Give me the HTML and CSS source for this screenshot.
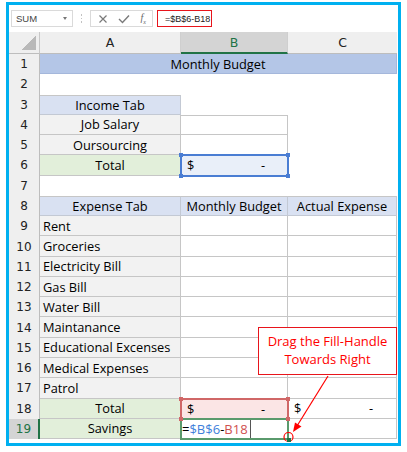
FILE: index.html
```html
<!DOCTYPE html>
<html lang="en">
<head>
  <meta charset="UTF-8" />
  <title>Monthly Budget</title>
  <link rel="stylesheet" href="styles.css">
</head>
<body>
  <div class="frame">
    <div class="fbar">
      <div class="namebox">SUM<span class="drop"></span></div>
      <div class="dots"><i></i><i></i><i></i></div>
      <div class="fbtns">
        <svg width="10" height="10" viewBox="0 0 10 10"><path d="M1.5 1.5 L8.5 8.5 M8.5 1.5 L1.5 8.5" stroke="#7a7a7a" stroke-width="1.2" fill="none"/></svg>
        <svg width="12" height="10" viewBox="0 0 12 10"><path d="M1 5 L4.5 8.5 L11 1.5" stroke="#7a7a7a" stroke-width="1.4" fill="none"/></svg>
        <span class="fx">f<sub>x</sub></span>
      </div>
      <div class="finput"><span class="fhl">=$B$6-B18</span></div>
    </div>

    <div class="sheet">
      <div class="corner"><span></span></div>
      <div class="ch">A</div>
      <div class="ch on">B</div>
      <div class="ch last">C</div>

      <div class="rh">1</div>
      <div class="c title">Monthly Budget</div>

      <div class="rh">2</div>
      <div class="c wide"></div>

      <div class="rh">3</div>
      <div class="c hd bt ctr">Income Tab</div>
      <div class="c"></div>
      <div class="c"></div>

      <div class="rh">4</div>
      <div class="c gy bx ctr">Job Salary</div>
      <div class="c bx bt"></div>
      <div class="c"></div>

      <div class="rh">5</div>
      <div class="c gy bx ctr">Oursourcing</div>
      <div class="c bx"></div>
      <div class="c"></div>

      <div class="rh">6</div>
      <div class="c gr bx ctr">Total</div>
      <div class="c acct sel blue">
        <span>$</span><span>-</span>
        <i class="knob tl"></i><i class="knob tr"></i><i class="knob bl"></i><i class="knob br"></i>
      </div>
      <div class="c"></div>

      <div class="rh">7</div>
      <div class="c wide"></div>

      <div class="rh">8</div>
      <div class="c hd bt ctr">Expense Tab</div>
      <div class="c hd bt ctr">Monthly Budget</div>
      <div class="c hd bt ctr">Actual Expense</div>

      <div class="rh">9</div>
      <div class="c gy bx">Rent</div>
      <div class="c bx"></div>
      <div class="c bx"></div>

      <div class="rh">10</div>
      <div class="c gy bx">Groceries</div>
      <div class="c bx"></div>
      <div class="c bx"></div>

      <div class="rh">11</div>
      <div class="c gy bx">Electricity Bill</div>
      <div class="c bx"></div>
      <div class="c bx"></div>

      <div class="rh">12</div>
      <div class="c gy bx">Gas Bill</div>
      <div class="c bx"></div>
      <div class="c bx"></div>

      <div class="rh">13</div>
      <div class="c gy bx">Water Bill</div>
      <div class="c bx"></div>
      <div class="c bx"></div>

      <div class="rh">14</div>
      <div class="c gy bx">Maintanance</div>
      <div class="c bx"></div>
      <div class="c bx"></div>

      <div class="rh">15</div>
      <div class="c gy bx">Educational Excenses</div>
      <div class="c bx"></div>
      <div class="c bx"></div>

      <div class="rh">16</div>
      <div class="c gy bx">Medical Expenses</div>
      <div class="c bx"></div>
      <div class="c bx"></div>

      <div class="rh">17</div>
      <div class="c gy bx">Patrol</div>
      <div class="c bx"></div>
      <div class="c bx"></div>

      <div class="rh">18</div>
      <div class="c gr bx ctr">Total</div>
      <div class="c acct sel red">
        <span>$</span><span>-</span>
        <i class="knob tl"></i><i class="knob tr"></i><i class="knob bl"></i><i class="knob br"></i>
      </div>
      <div class="c acct bx"><span>$</span><span>-</span></div>

      <div class="rh active">19</div>
      <div class="c gr bx ctr">Savings</div>
      <div class="c edit sel green">
        <span>=</span><span class="ref1">$B$6</span><span>-</span><span class="ref2">B18</span><span class="cursor"></span>
        <i class="knob fill"></i>
      </div>
      <div class="c bx"></div>
    </div>
  </div>

  <div class="callout">Drag the Fill-Handle<br>Towards Right</div>

  <svg class="arrow" width="407" height="452" viewBox="0 0 407 452">
    <line x1="328" y1="376" x2="297" y2="426" stroke="#ff0000" stroke-width="1.2"/>
    <polygon points="293,432 301.5,426.5 295,422.5" fill="#ff0000"/>
    <circle cx="288.5" cy="437" r="4.5" stroke="#ff0000" stroke-width="1.2" fill="none"/>
  </svg>
</body>
</html>
```

FILE: styles.css
```css
body {
  margin: 0;
  padding: 0;
  background: #fff;
  position: relative;
  width: 407px;
  height: 452px;
  font-family: "Open Sans", sans-serif;
}
.frame {
  box-sizing: border-box;
  width: 395px;
  height: 444px;
  margin: 2px 0 0 6px;
  border: 3px solid #00b0f0;
  background: #fff;
}
.fbar {
  height: 27px;
  display: flex;
  align-items: center;
  padding-left: 2px;
}
.namebox {
  box-sizing: border-box;
  width: 62px;
  height: 17px;
  border: 1px solid #dadada;
  font: 9.5px "Liberation Sans", sans-serif;
  color: #444;
  display: flex;
  align-items: center;
  justify-content: space-between;
  padding: 0 5px 0 4px;
}
.drop {
  width: 0;
  height: 0;
  border-left: 2.5px solid transparent;
  border-right: 2.5px solid transparent;
  border-top: 3px solid #777;
}
.dots {
  width: 17px;
  display: flex;
  flex-direction: column;
  align-items: center;
  gap: 2px;
}
.dots i {
  width: 1.5px;
  height: 1.5px;
  background: #c2c2c2;
}
.fbtns {
  box-sizing: border-box;
  width: 63px;
  height: 17px;
  border: 1px solid #dadada;
  display: flex;
  align-items: center;
  justify-content: space-between;
  padding: 0 6px 0 7px;
}
.fx {
  font: italic 10px "Liberation Serif", serif;
  color: #666;
}
.fx sub {
  font-size: 6px;
}
.finput {
  flex: 1;
  margin-left: 4px;
  height: 17px;
  display: flex;
  align-items: center;
}
.fhl {
  box-sizing: border-box;
  width: 55px;
  height: 17px;
  border: 1.5px solid #e8141b;
  font: 9px "Liberation Sans", sans-serif;
  color: #222;
  display: flex;
  align-items: center;
  padding-left: 7px;
  white-space: nowrap;
}
.sheet {
  display: grid;
  grid-template-columns: 31px 141px 107px 109px;
  grid-template-rows: 22px repeat(19, 20.28px);
  font-size: 12.8px;
  color: #000;
}
.corner {
  background: #efefef;
  border-right: 1px solid #c8c8c8;
  border-bottom: 1px solid #bdbdbd;
  display: flex;
  justify-content: flex-end;
  align-items: flex-end;
  padding: 0 3px 3px 0;
}
.corner span {
  width: 14px;
  height: 15px;
  background: linear-gradient(to bottom right, transparent 50%, #b9b9b9 50%);
}
.ch {
  background: #efefef;
  border-right: 1px solid #cfcfcf;
  border-bottom: 1px solid #bdbdbd;
  display: flex;
  align-items: center;
  justify-content: center;
  font: 12.5px "DejaVu Sans", sans-serif;
  color: #222;
}
.ch.on {
  background: #d4d4d4;
  color: #217346;
  border-bottom: 2px solid #217346;
}
.ch.last {
  border-right: none;
}
.rh {
  background: #efefef;
  border-right: 1px solid #bdbdbd;
  display: flex;
  align-items: center;
  justify-content: center;
  font: 12px "DejaVu Sans", sans-serif;
  color: #222;
}
.rh.active {
  background: #d4d4d4;
  color: #217346;
  border-right: 2px solid #217346;
}
.c {
  box-sizing: border-box;
  display: flex;
  align-items: center;
  padding: 0 3px;
  position: relative;
  white-space: nowrap;
}
.ctr {
  justify-content: center;
}
.wide {
  grid-column: span 3;
}
.title {
  grid-column: span 3;
  justify-content: center;
  background: #b4c6e7;
  border-right: 1px solid #a4b7db;
  border-bottom: 1px solid #a4b7db;
}
.hd {
  background: #d9e1f2;
  border-right: 1px solid #c3c9d4;
  border-bottom: 1px solid #c3c9d4;
}
.gy {
  background: #f2f2f2;
}
.gr {
  background: #e2efda;
}
.bx {
  border-right: 1px solid #c6c6c6;
  border-bottom: 1px solid #c6c6c6;
}
.bt {
  border-top: 1px solid #c6c6c6;
}
.acct {
  justify-content: space-between;
  padding: 0 23px 0 6px;
}
.sel::after {
  content: "";
  position: absolute;
  left: -1px;
  top: -1px;
  right: -1px;
  bottom: -1px;
  border: 2px solid var(--sc);
}
.knob {
  position: absolute;
  width: 4px;
  height: 4px;
  background: var(--sc);
  z-index: 1;
}
.knob.tl { left: -2px; top: -2px; }
.knob.tr { right: -2px; top: -2px; }
.knob.bl { left: -2px; bottom: -2px; }
.knob.br { right: -2px; bottom: -2px; }
.knob.fill { right: -3px; bottom: -3px; width: 4px; height: 4px; background: #217346; }
.blue {
  --sc: #4a7dd3;
  background: #e9eff9;
}
.red {
  --sc: #d06767;
  background: #fbe5e5;
}
.green {
  --sc: #5a9a6c;
  background: #fff;
}
.edit {
  padding-left: 1px;
  font-size: 13px;
}
.ref1 {
  color: #3e7fdb;
}
.ref2 {
  color: #d0504f;
}
.cursor {
  width: 1px;
  align-self: stretch;
  background: #555;
  margin-left: 2px;
}
.callout {
  position: absolute;
  left: 258px;
  top: 327px;
  box-sizing: border-box;
  width: 139px;
  height: 48px;
  border: 1.5px solid #e8141b;
  background: #fff;
  color: #ff0000;
  font: 13px/18px "Open Sans", sans-serif;
  text-align: center;
  padding-top: 4px;
}
.arrow {
  position: absolute;
  left: 0;
  top: 0;
}
```
